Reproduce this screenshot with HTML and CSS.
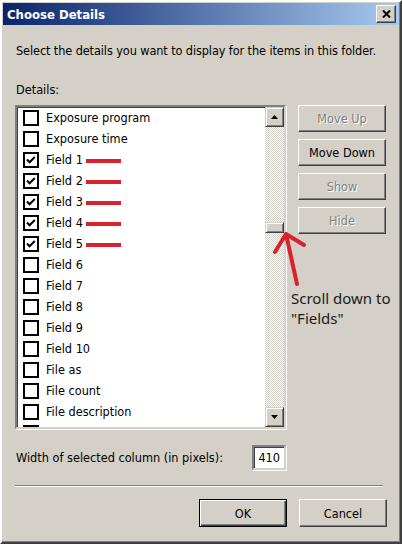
FILE: index.html
```html
<!DOCTYPE html>
<html lang="en">
<head>
    <meta charset="UTF-8">
    <title>Choose Details</title>
    <link rel="stylesheet" href="styles.css">
</head>
<body>
    <div class="window">
        <div class="titlebar">
            <span class="title">Choose Details</span>
            <div class="close">
                <svg width="9" height="8" viewBox="0 0 9 8">
                    <path d="M1 0.5 L8 7.5 M8 0.5 L1 7.5" stroke="#000" stroke-width="2"/>
                </svg>
            </div>
        </div>

        <div class="content">
            <p class="intro">Select the details you want to display for the items in this folder.</p>
            <p class="label">Details:</p>

            <div class="main">
                <div class="listbox">
                    <ul class="items">
                        <li><span class="check"></span>Exposure program</li>
                        <li><span class="check"></span>Exposure time</li>
                        <li><span class="check on"></span>Field 1<span class="mark"></span></li>
                        <li><span class="check on"></span>Field 2<span class="mark"></span></li>
                        <li><span class="check on"></span>Field 3<span class="mark"></span></li>
                        <li><span class="check on"></span>Field 4<span class="mark"></span></li>
                        <li><span class="check on"></span>Field 5<span class="mark"></span></li>
                        <li><span class="check"></span>Field 6</li>
                        <li><span class="check"></span>Field 7</li>
                        <li><span class="check"></span>Field 8</li>
                        <li><span class="check"></span>Field 9</li>
                        <li><span class="check"></span>Field 10</li>
                        <li><span class="check"></span>File as</li>
                        <li><span class="check"></span>File count</li>
                        <li><span class="check"></span>File description</li>
                        <li><span class="check"></span></li>
                    </ul>
                    <div class="scrollbar">
                        <div class="sb-btn">
                            <svg width="7" height="4" viewBox="0 0 7 4"><path d="M3.5 0 L7 4 L0 4 Z" fill="#000"/></svg>
                        </div>
                        <div class="track"><div class="thumb"></div></div>
                        <div class="sb-btn">
                            <svg width="7" height="4" viewBox="0 0 7 4"><path d="M0 0 L7 0 L3.5 4 Z" fill="#000"/></svg>
                        </div>
                    </div>
                </div>

                <div class="side-buttons">
                    <div class="btn disabled">Move Up</div>
                    <div class="btn">Move Down</div>
                    <div class="btn disabled">Show</div>
                    <div class="btn disabled">Hide</div>
                </div>
            </div>

            <div class="width-row">
                <span>Width of selected column (in pixels):</span>
                <div class="field">410</div>
            </div>

            <div class="sep"></div>

            <div class="footer">
                <div class="btn default">OK</div>
                <div class="btn">Cancel</div>
            </div>
        </div>

        <!-- red annotation drawn over the dialog -->
        <svg class="arrow" width="45" height="65" viewBox="0 0 45 65">
            <path d="M8 25 L19 7 L37 18 M19 7 L30 57" fill="none" stroke="#d9222d" stroke-width="4" stroke-linecap="round" stroke-linejoin="round"/>
        </svg>
        <div class="note">Scroll down to<br>"Fields"</div>
    </div>
</body>
</html>
```

FILE: styles.css
```css
:root {
    --face: #d4d0c8;
    --light: #ffffff;
    --shadow: #808080;
    --dark: #404040;
    --red: #d9222d;
}

* {
    box-sizing: border-box;
}

body {
    margin: 0;
    background-color: var(--face);
    font-family: "DejaVu Sans Condensed", "DejaVu Sans", sans-serif;
    font-size: 12.6px;
    color: #000;
}

p {
    margin: 0;
}

.window {
    position: relative;
    width: 402px;
    height: 544px;
    padding: 1px;
    background-color: var(--face);
    border: 2px solid;
    border-color: var(--light) var(--dark) var(--dark) var(--light);
    box-shadow: inset -1px -1px var(--shadow);
}

.titlebar {
    display: flex;
    align-items: center;
    justify-content: space-between;
    height: 22px;
    padding: 0 3px 0 4px;
    background: linear-gradient(to right, #0a246a, #a6caf0);
}

.title {
    color: #fff;
    font-weight: bold;
    font-size: 13px;
}

.close {
    display: flex;
    align-items: center;
    justify-content: center;
    width: 20px;
    height: 18px;
    background-color: var(--face);
    border: 1px solid;
    border-color: var(--light) var(--dark) var(--dark) var(--light);
    box-shadow: inset -1px -1px var(--shadow);
}

.content {
    padding: 0 12px;
}

.intro {
    margin-top: 18px;
    padding-left: 1px;
    line-height: 16px;
    white-space: nowrap;
    letter-spacing: -0.1px;
}

.label {
    margin-top: 23px;
    padding-left: 1px;
    line-height: 16px;
}

.main {
    display: flex;
    gap: 12px;
    margin-top: 7px;
}

.listbox {
    display: flex;
    width: 271px;
    height: 324px;
    background-color: #fff;
    border: 2px solid;
    border-color: var(--shadow) var(--face) var(--face) var(--shadow);
    box-shadow: inset 1px 1px var(--dark), 1px 1px var(--light);
    overflow: hidden;
}

.items {
    flex: 1;
    margin: 0;
    padding: 0;
    list-style: none;
}

.items li {
    display: flex;
    align-items: center;
    height: 21px;
    padding-left: 6px;
    line-height: 21px;
    white-space: nowrap;
}

.check {
    display: flex;
    align-items: center;
    justify-content: center;
    flex: none;
    width: 16px;
    height: 16px;
    margin-right: 7px;
    border: 2px solid #000;
    background-color: #fff;
}

.check.on::after {
    content: "";
    width: 12px;
    height: 12px;
    background: url("data:image/svg+xml,%3Csvg xmlns='http://www.w3.org/2000/svg' width='12' height='12' viewBox='0 0 12 12'%3E%3Cpath d='M2 5.5 L4.6 8.2 L9.8 3' fill='none' stroke='%23000' stroke-width='2'/%3E%3C/svg%3E") no-repeat;
}

.mark {
    display: inline-block;
    width: 35px;
    height: 4px;
    margin: 2px 0 0 3px;
    background-color: var(--red);
}

.scrollbar {
    display: flex;
    flex-direction: column;
    flex: none;
    width: 19px;
}

.sb-btn {
    display: flex;
    align-items: center;
    justify-content: center;
    height: 20px;
    background-color: var(--face);
    border: 1px solid;
    border-color: var(--face) var(--dark) var(--dark) var(--face);
    box-shadow: inset 1px 1px var(--light), inset -1px -1px var(--shadow);
}

.track {
    flex: 1;
    background-image: conic-gradient(#fff 25%, var(--face) 0 50%, #fff 0 75%, var(--face) 0);
    background-size: 2px 2px;
}

.thumb {
    height: 11px;
    margin-top: 95px;
    background-color: var(--face);
    border: 1px solid;
    border-color: var(--face) var(--dark) var(--dark) var(--face);
    box-shadow: inset 1px 1px var(--light), inset -1px -1px var(--shadow);
}

.side-buttons {
    display: flex;
    flex-direction: column;
    gap: 7px;
}

.btn {
    display: flex;
    align-items: center;
    justify-content: center;
    width: 88px;
    height: 27px;
    background-color: var(--face);
    border: 1px solid;
    border-color: var(--light) var(--dark) var(--dark) var(--light);
    box-shadow: inset -1px -1px var(--shadow);
}

.btn.disabled {
    color: var(--shadow);
    text-shadow: 1px 1px var(--light);
}

.btn.default {
    border: 1px solid #000;
    box-shadow: inset 1px 1px var(--light), inset -1px -1px var(--dark), inset -2px -2px var(--shadow);
}

.width-row {
    display: flex;
    align-items: center;
    justify-content: space-between;
    width: 271px;
    margin-top: 16px;
    padding-left: 1px;
}

.field {
    width: 34px;
    height: 25px;
    padding-right: 4px;
    line-height: 21px;
    text-align: right;
    background-color: #fff;
    border: 2px solid;
    border-color: var(--shadow) var(--face) var(--face) var(--shadow);
    box-shadow: inset 1px 1px var(--dark), 1px 1px var(--light);
}

.sep {
    width: 368px;
    margin-top: 15px;
    border-top: 1px solid var(--shadow);
    border-bottom: 1px solid var(--light);
}

.footer {
    display: flex;
    justify-content: flex-end;
    gap: 12px;
    margin-top: 12px;
}

.footer .btn {
    height: 28px;
}

.arrow {
    position: absolute;
    left: 265px;
    top: 225px;
}

.note {
    position: absolute;
    left: 289px;
    top: 286px;
    font-family: "Noto Sans", sans-serif;
    font-size: 15px;
    line-height: 20px;
    color: #1a1a1a;
}
```
